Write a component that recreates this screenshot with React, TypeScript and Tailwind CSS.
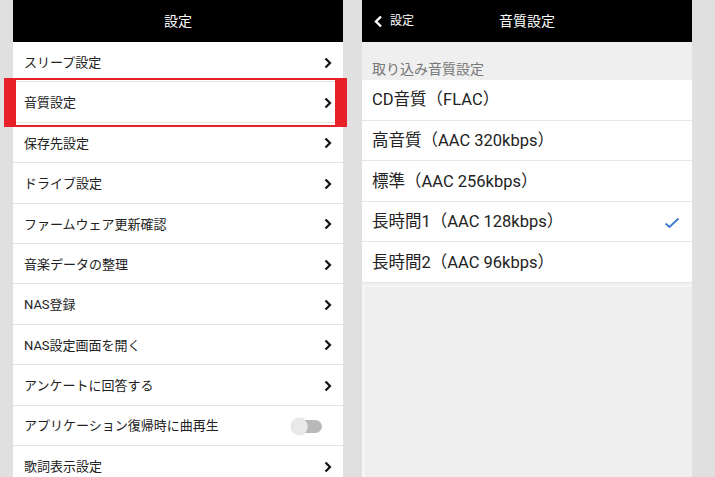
import React from 'react';

const font = { fontFamily: 'Roboto, "Noto Sans CJK JP", "Noto Sans", sans-serif' };

const settings = [
  'スリープ設定',
  '音質設定',
  '保存先設定',
  'ドライブ設定',
  'ファームウェア更新確認',
  '音楽データの整理',
  'NAS登録',
  'NAS設定画面を開く',
  'アンケートに回答する',
  'アプリケーション復帰時に曲再生',
  '歌詞表示設定',
];

const qualities = [
  'CD音質（FLAC）',
  '高音質（AAC 320kbps）',
  '標準（AAC 256kbps）',
  '長時間1（AAC 128kbps）',
  '長時間2（AAC 96kbps）',
];

function Chevron() {
  return (
    <svg width="8" height="12" viewBox="0 0 8 12" className="shrink-0">
      <polyline points="1.5,1.5 6,6 1.5,10.5" fill="none" stroke="#111" strokeWidth="2.2" />
    </svg>
  );
}

function Toggle() {
  return (
    <div className="relative mr-[10px] h-[17px] w-[31px]">
      <div className="absolute right-0 top-[2px] h-[13px] w-[24px] rounded-full bg-[#b9b9b9]" />
      <div className="absolute left-0 top-0 h-[17px] w-[17px] rounded-full bg-[#e9e9e9] shadow-[0_0_1px_rgba(0,0,0,0.25)]" />
    </div>
  );
}

export default function App() {
  return (
    <div className="relative flex h-[477px] w-[715px] overflow-hidden bg-[#e0e0e0]" style={font}>
      {/* left: settings list */}
      <div className="ml-[13px] flex w-[330px] flex-col bg-white">
        <div className="flex h-[42px] shrink-0 items-center justify-center bg-black text-[14px] text-white">
          設定
        </div>
        {settings.map((s, i) => (
          <div
            key={s}
            className="flex h-[40.4px] shrink-0 items-center justify-between border-b border-[#e3e3e3] pl-[11px] pr-[11px] pt-[2px] text-[13px] text-[#222]"
          >
            <span>{s}</span>
            {i === 9 ? <Toggle /> : <Chevron />}
          </div>
        ))}
      </div>

      {/* right: quality */}
      <div className="ml-[19px] flex w-[330px] flex-col bg-[#efefef]">
        <div className="flex h-[42px] shrink-0 items-center bg-black text-white">
          <div className="flex w-[80px] items-center pl-[12px]">
            <svg width="9" height="13" viewBox="0 0 9 13">
              <polyline points="7,1.5 2,6.5 7,11.5" fill="none" stroke="#fff" strokeWidth="2.4" />
            </svg>
            <span className="ml-[7px] text-[12px]">設定</span>
          </div>
          <div className="flex-1 text-center text-[14px]">音質設定</div>
          <div className="w-[80px]" />
        </div>
        <div className="flex h-[38px] shrink-0 items-end pb-0 pl-[10px] text-[14px] text-[#777]">
          取り込み音質設定
        </div>
        <div className="bg-white">
          {qualities.map((q, i) => (
            <div
              key={q}
              className="flex h-[40.6px] items-center justify-between border-b border-[#e6e6e6] pl-[10px] pr-[12px] pt-[2px] text-[16.5px] text-[#222]"
            >
              <span>{q}</span>
              {i === 3 && (
                <svg width="16" height="12" viewBox="0 0 16 12">
                  <polyline points="1.5,6.5 5.5,10 14.5,1.5" fill="none" stroke="#3a7bd0" strokeWidth="1.8" />
                </svg>
              )}
            </div>
          ))}
        </div>
        <div className="mt-[2px] flex-1 border-l-[3px] border-t-[2px] border-[#f5f5f5]" />
      </div>

      {/* highlight frame */}
      <div className="pointer-events-none absolute left-[4px] top-[78px] h-[49px] w-[343px] border-x-[12px] border-y-2 border-[#e8202a]" />
    </div>
  );
}
